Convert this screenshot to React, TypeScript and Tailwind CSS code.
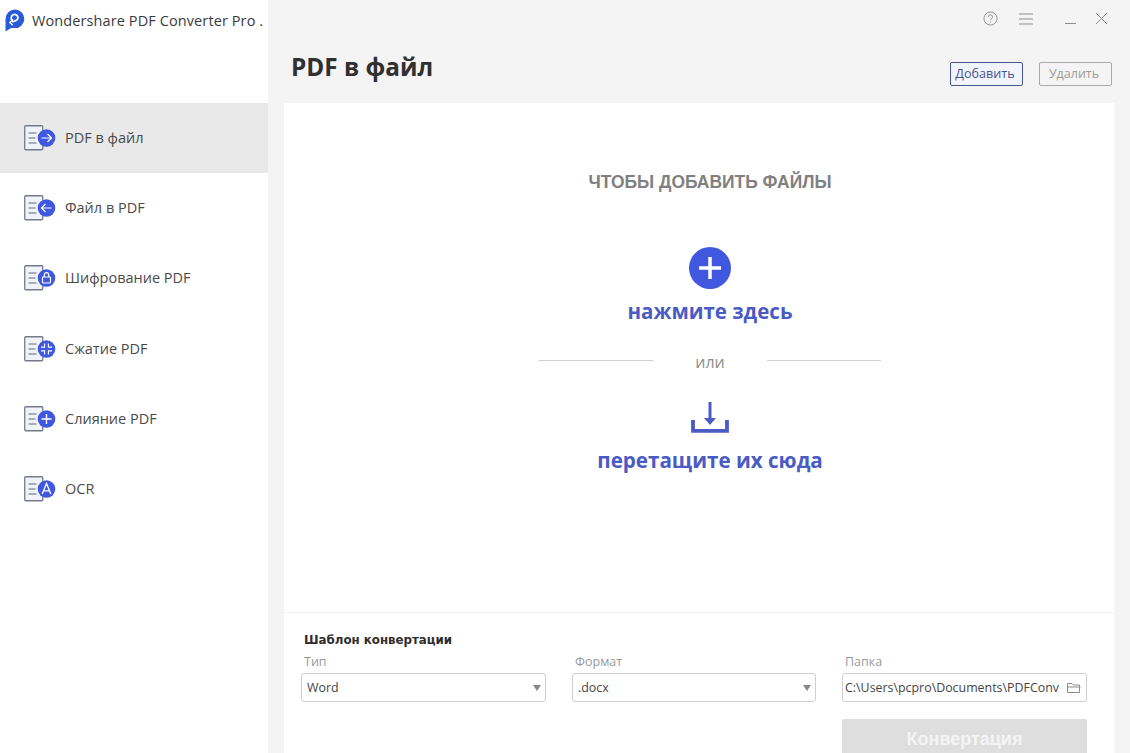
import React from "react";

const BLUE = "#4058e0";

function NavIcon({ kind }: { kind: string }) {
  return (
    <svg width="32" height="26" viewBox="0 0 32 26" className="shrink-0" fill="none">
      <rect x="0.75" y="0.75" width="18" height="24" rx="1" fill="#f1f3fb" stroke="#747a8a" strokeWidth="1.3" />
      <path d="M4.500 8h8M4.500 13h7M4.500 18h8" stroke="#62687a" strokeWidth="1.2" />
      <circle cx="22.500" cy="13" r="8.800" fill={BLUE} />
      {kind === "right" && <path d="M17.500 13h9.500M23.500 9l4 4-4 4" stroke="#fff" strokeWidth="1.2" />}
      {kind === "left" && <path d="M27.500 13h-9.500M21.500 9l-4 4 4 4" stroke="#fff" strokeWidth="1.2" />}
      {kind === "lock" && (
        <g stroke="#fff" strokeWidth="1.2">
          <rect x="18.500" y="12" width="8" height="6" rx="0.8" />
          <path d="M20.300 12v-2.200a2.200 2.200 0 0 1 4.400 0V12" />
        </g>
      )}
      {kind === "compress" && (
        <path d="M20.600 7.500V11.100H17M24.400 7.500V11.100H28M20.600 18.500V14.900H17M24.400 18.500V14.900H28" stroke="#fff" strokeWidth="1.1" />
      )}
      {kind === "plus" && <path d="M22.500 8v10M17.500 13h10" stroke="#fff" strokeWidth="1.4" />}
      {kind === "a" && <path d="M18.200 18l4.300-10.500L26.800 18M19.700 14.800h5.600" stroke="#fff" strokeWidth="1.3" />}
    </svg>
  );
}

const items = [
  { label: "PDF в файл", kind: "right", active: true },
  { label: "Файл в PDF", kind: "left" },
  { label: "Шифрование PDF", kind: "lock" },
  { label: "Сжатие PDF", kind: "compress" },
  { label: "Слияние PDF", kind: "plus" },
  { label: "OCR", kind: "a" },
];

function Arrow() {
  return <span className="block border-x-[4.5px] border-t-[6px] border-x-transparent border-t-[#85888d]" />;
}

export default function App() {
  return (
    <div className="flex h-[753px] w-[1130px] overflow-hidden bg-[#f4f4f4] font-['Open_Sans','Noto_Sans',sans-serif] text-[#333]">
      <aside className="flex w-[268px] shrink-0 flex-col bg-white">
        <div className="flex h-[103px] shrink-0 items-start gap-[7px] pl-[5px] pt-[9px]">
          <svg width="20" height="23" viewBox="0 0 20 23" className="shrink-0">
            <path d="M10 0.500a9.300 9.300 0 0 1 0 18.600H6L0.500 22.500V10A9.500 9.500 0 0 1 10 0.500z" fill="#2a5bd7" />
            <path d="M7.500 11.500a3.400 3.400 0 1 1 5.500-2.700c0 2.200-2.600 3.300-5.800 4" fill="none" stroke="#fff" strokeWidth="1.7" />
            <path d="M8 10.500l-3.200 3 3 2.700" fill="none" stroke="#fff" strokeWidth="1.3" />
          </svg>
          <span className="whitespace-nowrap pt-[1px] text-[14.500px] leading-[22px] tracking-[0.1px] text-[#3a3a3a]">
            Wondershare PDF Converter Pro .
          </span>
        </div>
        <nav className="flex flex-col">
          {items.map((it) => (
            <div
              key={it.label}
              className={`flex h-[70.300px] items-center gap-[9px] pb-[1px] pl-[24px] text-[14.500px] text-[#4a4a4a] ${it.active ? "bg-[#e9e9e9]" : ""}`}
            >
              <NavIcon kind={it.kind} />
              <span>{it.label}</span>
            </div>
          ))}
        </nav>
      </aside>

      <main className="flex min-w-0 flex-1 flex-col">
        <header className="relative h-[103px] shrink-0">
          <div className="absolute right-[22px] top-[11px] flex items-center text-[#8d8d8d]">
            <svg width="15" height="15" viewBox="0 0 16 16" fill="none" stroke="#8d8d8d" strokeWidth="1">
              <circle cx="8" cy="8" r="7" />
              <path d="M5.800 6.300a2.200 2.200 0 1 1 3.300 1.900c-.7.400-1.100.8-1.100 1.700M8 11.200v1" />
            </svg>
            <svg className="ml-[20px]" width="16" height="12" viewBox="0 0 16 12" fill="none" stroke="#8d8d8d" strokeWidth="1">
              <path d="M1 1h14M1 6h14M1 11h14" />
            </svg>
            <svg className="ml-[31px]" width="11" height="12" viewBox="0 0 11 12" fill="none" stroke="#8d8d8d" strokeWidth="1">
              <path d="M0 10.500h11" />
            </svg>
            <svg className="ml-[19px]" width="13" height="13" viewBox="0 0 13 13" fill="none" stroke="#8d8d8d" strokeWidth="1">
              <path d="M1 1l11 11M12 1L1 12" />
            </svg>
          </div>
          <div className="flex h-full items-start justify-between pl-[23px] pr-[18px]">
            <h1 className="mt-[50px] text-[24.300px] font-bold leading-[34px] text-[#303030]">PDF в файл</h1>
            <div className="mt-[62px] flex gap-[16px]">
              <button className="h-[24px] w-[73px] rounded-[2px] border border-[#47568f] bg-[#f1f4fd] pr-[3px] text-[12.600px] text-[#47568f]">
                Добавить
              </button>
              <button className="h-[24px] w-[73px] rounded-[2px] border border-[#a9a9a9] bg-transparent pr-[3px] text-[12.500px] text-[#9b9b9b]">
                Удалить
              </button>
            </div>
          </div>
        </header>

        <section className="mx-[16px] flex min-h-0 flex-1 flex-col bg-white">
          <div className="flex h-[510px] shrink-0 flex-col items-center border-b border-[#f1f1f1] pl-[22px]">
            <p className="mt-[67px] font-['Liberation_Sans',sans-serif] text-[17.450px] font-bold leading-[24px] text-[#808080]">ЧТОБЫ ДОБАВИТЬ ФАЙЛЫ</p>
            <span className="mt-[53px] flex h-[42px] w-[42px] items-center justify-center rounded-full bg-[#4058e0]">
              <svg width="22" height="22" viewBox="0 0 22 22" fill="none" stroke="#fff" strokeWidth="3.500">
                <path d="M11 0v22M0 11h22" />
              </svg>
            </span>
            <p className="mt-[7px] text-[20.500px] font-bold leading-[30px] text-[#4a5bc4]">нажмите здесь</p>
            <div className="mt-[21px] flex w-[342px] items-start justify-between">
              <span className="mt-[13px] h-px w-[114px] bg-[#cfcfcf]" />
              <span className="mt-[6px] text-[16px] leading-[18px] text-[#8f8f8f]">или</span>
              <span className="mt-[13px] h-px w-[114px] bg-[#cfcfcf]" />
            </div>
            <svg className="mt-[31px]" width="38" height="31" viewBox="0 0 38 31" fill="none" stroke="#4a5bc4">
              <path d="M2 18v10.800h34V18" strokeWidth="3.800" />
              <path d="M19 0v20" strokeWidth="3" />
              <path d="M13 16h12L19 23z" fill="#4a5bc4" stroke="none" />
            </svg>
            <p className="mt-[12px] text-[20.600px] font-bold leading-[30px] text-[#4a5bc4]">перетащите их сюда</p>
          </div>

          <div className="flex-1 pl-[17px] pr-[27px]">
            <h2 className="ml-[3px] mt-[18px] font-['DejaVu_Sans',sans-serif] text-[11.800px] font-bold leading-[18px] text-[#2e2e2e]">Шаблон конвертации</h2>
            <div className="mt-[5px] grid grid-cols-[245px_244px_245px] gap-x-[26px]">
              <div>
                <label className="ml-[3px] block text-[12.500px] leading-[16px] text-[#999]">Тип</label>
                <div className="mt-[3px] flex h-[29px] items-center justify-between rounded-[3px] border border-[#cfcfcf] pl-[5px] pr-[3px] pt-[1px] text-[12.400px] text-[#444]">
                  Word <span className="mr-[1px]"><Arrow /></span>
                </div>
              </div>
              <div>
                <label className="ml-[3px] block text-[12.500px] leading-[16px] text-[#999]">Формат</label>
                <div className="mt-[3px] flex h-[29px] items-center justify-between rounded-[3px] border border-[#cfcfcf] pl-[5px] pr-[3px] pt-[1px] text-[12.400px] text-[#444]">
                  .docx <span className="mr-[1px]"><Arrow /></span>
                </div>
              </div>
              <div>
                <label className="ml-[3px] block text-[12.500px] leading-[16px] text-[#999]">Папка</label>
                <div className="mt-[3px] flex h-[29px] items-center rounded-[3px] border border-[#cfcfcf] pl-[2px] pr-[5px] pt-[1px] text-[12.400px] text-[#444]">
                  <span className="w-[215px] shrink-0 overflow-hidden whitespace-nowrap">C:\Users\pcpro\Documents\PDFConv</span>
                  <svg className="ml-auto shrink-0" width="14" height="12" viewBox="0 0 14 12" fill="none" stroke="#8a8a8a" strokeWidth="1">
                    <path d="M.500 10.500v-9h4.500l1.500 1.500h6v7.500zM.500 5h13" />
                  </svg>
                </div>
                <button className="mt-[17px] h-[40px] w-full rounded-[2px] bg-[#dedede] font-['Liberation_Sans',sans-serif] text-[18px] font-bold text-[#f4f4f4]">
                  Конвертация
                </button>
              </div>
            </div>
          </div>
        </section>
      </main>
    </div>
  );
}
